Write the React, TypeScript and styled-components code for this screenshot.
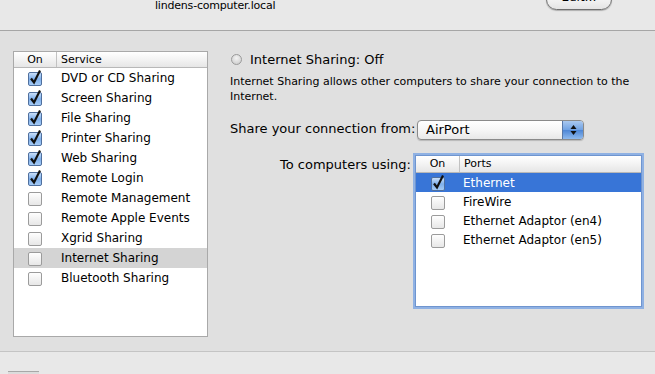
import React from "react"
import styled, { createGlobalStyle } from "styled-components"

const Global = createGlobalStyle`
  html, body {
    margin: 0;
    padding: 0;
    background: #e8e8e8;
  }
  body {
    font-family: "Lucida Grande", "DejaVu Sans", sans-serif;
    color: #000;
  }
`

const Window = styled.div`
  width: 655px;
  height: 374px;
  overflow: hidden;
  display: flex;
  flex-direction: column;
  background: #e0e0e0;
`

const TopBar = styled.div`
  height: 30px;
  flex: none;
  background: #e8e8e8;
  border-bottom: 1px solid #a6a6a6;
  display: flex;
  align-items: flex-start;
  position: relative;
`

const ComputerName = styled.div`
  margin: -1px 0 0 155px;
  font-size: 11px;
  line-height: 13px;
  letter-spacing: -0.2px;
`

const EditButton = styled.div`
  position: absolute;
  left: 546px;
  top: -11px;
  width: 64px;
  height: 19px;
  border: 1px solid #6e6e6e;
  border-radius: 11px;
  background: linear-gradient(#ffffff, #f0f0f0 60%, #e4e4e4);
  box-shadow: 0 1px 1px rgba(0, 0, 0, 0.25);
  font-size: 12px;
  text-align: center;
  line-height: 15px;
`

const Main = styled.div`
  height: 321px;
  flex: none;
  display: flex;
  padding: 20px 0 0 13px;
  box-sizing: border-box;
  border-bottom: 1px solid #c4c4c4;
`

const Footer = styled.div`
  flex: 1;
  background: #e8e8e8;
  position: relative;
`

const FooterButton = styled.div`
  position: absolute;
  left: 8px;
  top: 19px;
  width: 31px;
  height: 10px;
  border-top: 1px solid #a8a8a8;
  background: #dcdcdc;
`

const ListBox = styled.div<{ $w: number; $h: number; $focus?: boolean }>`
  width: ${(p) => p.$w}px;
  height: ${(p) => p.$h}px;
  flex: none;
  background: #fff;
  border: 1px solid ${(p) => (p.$focus ? "#6f95cf" : "#a9a9a9")};
  box-shadow: ${(p) => (p.$focus ? "0 0 0 2px #8fb1e3" : "none")};
  box-sizing: border-box;
  overflow: hidden;
`

const Header = styled.div<{ $on: number; $h: number }>`
  display: grid;
  grid-template-columns: ${(p) => p.$on}px 1fr;
  height: ${(p) => p.$h}px;
  background: linear-gradient(#ffffff, #f3f3f3 50%, #e6e6e6);
  border-bottom: 1px solid #b8b8b8;
  font-size: 11px;
  line-height: ${(p) => p.$h}px;
`

const HeadCell = styled.div<{ $center?: boolean }>`
  text-align: ${(p) => (p.$center ? "center" : "left")};
  padding-left: ${(p) => (p.$center ? 0 : 4)}px;
  border-right: ${(p) => (p.$center ? "1px solid #c2c2c2" : "none")};
`

const Row = styled.div<{ $on: number; $h: number; $bg?: string; $sel?: boolean }>`
  display: grid;
  grid-template-columns: ${(p) => p.$on}px 1fr;
  align-items: center;
  height: ${(p) => p.$h}px;
  background: ${(p) => p.$bg || "transparent"};
  color: ${(p) => (p.$sel ? "#fff" : "#000")};
  font-size: 12px;
`

const BoxCell = styled.div<{ $left: number }>`
  display: flex;
  padding-left: ${(p) => p.$left}px;
`

const Label = styled.div<{ $pad: number }>`
  padding-left: ${(p) => p.$pad}px;
  white-space: nowrap;
`

const Right = styled.div`
  margin-left: 22px;
  display: flex;
  flex-direction: column;
`

const StatusLine = styled.div`
  display: flex;
  align-items: center;
  gap: 8px;
  font-size: 13px;
  height: 18px;
  margin-top: -1px;
`

const Radio = styled.div`
  width: 9px;
  height: 9px;
  margin-left: 1px;
  border-radius: 50%;
  border: 1px solid #9a9a9a;
  background: radial-gradient(circle at 50% 35%, #f4f4f4, #c6c6c6);
`

const Description = styled.div`
  font-size: 11px;
  line-height: 15px;
  margin-top: 6px;
  width: 410px;
`

const FormRow = styled.div<{ $top: number; $indent: number }>`
  display: flex;
  align-items: flex-start;
  margin-top: ${(p) => p.$top}px;
  padding-left: ${(p) => p.$indent}px;
`

const FormLabel = styled.div<{ $w: number; $pt: number }>`
  width: ${(p) => p.$w}px;
  font-size: 13px;
  padding-top: ${(p) => p.$pt}px;
  white-space: nowrap;
`

const Popup = styled.div`
  width: 167px;
  height: 20px;
  box-sizing: border-box;
  border: 1px solid #8a8a8a;
  border-radius: 4px;
  background: linear-gradient(#ffffff, #f6f6f6 50%, #e8e8e8);
  box-shadow: 0 1px 1px rgba(0, 0, 0, 0.18);
  display: flex;
  overflow: hidden;
  font-size: 13px;
`

const PopupText = styled.div`
  flex: 1;
  padding-left: 8px;
  line-height: 18px;
`

const Stepper = styled.div`
  width: 20px;
  background: linear-gradient(#a9c8ef, #6fa1e3 50%, #4d86d6 51%, #8db9ee);
  border-left: 1px solid #5878a8;
  display: flex;
  align-items: center;
  justify-content: center;
`

const Checkbox = ({ on }: { on: boolean }) => (
  <svg width="15" height="16" viewBox="0 0 15 16">
    <defs>
      <linearGradient id={on ? "cbOn" : "cbOff"} x1="0" y1="0" x2="0" y2="1">
        {on ? (
          <>
            <stop offset="0" stopColor="#cfe3fa" />
            <stop offset="0.5" stopColor="#7fb0ec" />
            <stop offset="1" stopColor="#a8cdf6" />
          </>
        ) : (
          <>
            <stop offset="0" stopColor="#ffffff" />
            <stop offset="1" stopColor="#e6e6e6" />
          </>
        )}
      </linearGradient>
    </defs>
    <rect
      x="0.5"
      y="2.5"
      width="13"
      height="13"
      rx="1.5"
      fill={`url(#${on ? "cbOn" : "cbOff"})`}
      stroke={on ? "#50709e" : "#9b9b9b"}
    />
    {on && (
      <path
        d="M3 8.5 L6 12.5 L12 0.5"
        fill="none"
        stroke="#111"
        strokeWidth="2.2"
        strokeLinejoin="miter"
      />
    )}
  </svg>
)

const services: [string, boolean][] = [
  ["DVD or CD Sharing", true],
  ["Screen Sharing", true],
  ["File Sharing", true],
  ["Printer Sharing", true],
  ["Web Sharing", true],
  ["Remote Login", true],
  ["Remote Management", false],
  ["Remote Apple Events", false],
  ["Xgrid Sharing", false],
  ["Internet Sharing", false],
  ["Bluetooth Sharing", false],
]

const ports: [string, boolean][] = [
  ["Ethernet", true],
  ["FireWire", false],
  ["Ethernet Adaptor (en4)", false],
  ["Ethernet Adaptor (en5)", false],
]

export default function App() {
  return (
    <>
      <Global />
      <Window>
        <TopBar>
          <ComputerName>lindens-computer.local</ComputerName>
          <EditButton>Edit…</EditButton>
        </TopBar>
        <Main>
          <ListBox $w={195} $h={286}>
            <Header $on={43} $h={15}>
              <HeadCell $center>On</HeadCell>
              <HeadCell>Service</HeadCell>
            </Header>
            {services.map(([name, on]) => (
              <Row
                key={name}
                $on={43}
                $h={20}
                $bg={name === "Internet Sharing" ? "#d4d4d4" : undefined}
              >
                <BoxCell $left={14}>
                  <Checkbox on={on} />
                </BoxCell>
                <Label $pad={4}>{name}</Label>
              </Row>
            ))}
          </ListBox>
          <Right>
            <StatusLine>
              <Radio />
              <span>Internet Sharing: Off</span>
            </StatusLine>
            <Description>
              Internet Sharing allows other computers to share your connection to the
              Internet.
            </Description>
            <FormRow $top={16} $indent={0}>
              <FormLabel $w={187} $pt={1}>
                Share your connection from:
              </FormLabel>
              <Popup>
                <PopupText>AirPort</PopupText>
                <Stepper>
                  <svg width="7" height="12" viewBox="0 0 7 12">
                    <path d="M3.5 1 L6.5 5 L0.5 5 Z" fill="#111" />
                    <path d="M3.5 11 L6.5 7 L0.5 7 Z" fill="#111" />
                  </svg>
                </Stepper>
              </Popup>
            </FormRow>
            <FormRow $top={15} $indent={50}>
              <FormLabel $w={135} $pt={2}>
                To computers using:
              </FormLabel>
              <ListBox $w={227} $h={152} $focus>
                <Header $on={44} $h={16}>
                  <HeadCell $center>On</HeadCell>
                  <HeadCell>Ports</HeadCell>
                </Header>
                {ports.map(([name, on], i) => (
                  <Row
                    key={name}
                    $on={44}
                    $h={19}
                    $bg={i === 0 ? "#3875d7" : undefined}
                    $sel={i === 0}
                  >
                    <BoxCell $left={15}>
                      <Checkbox on={on} />
                    </BoxCell>
                    <Label $pad={3}>{name}</Label>
                  </Row>
                ))}
              </ListBox>
            </FormRow>
          </Right>
        </Main>
        <Footer>
          <FooterButton />
        </Footer>
      </Window>
    </>
  )
}
